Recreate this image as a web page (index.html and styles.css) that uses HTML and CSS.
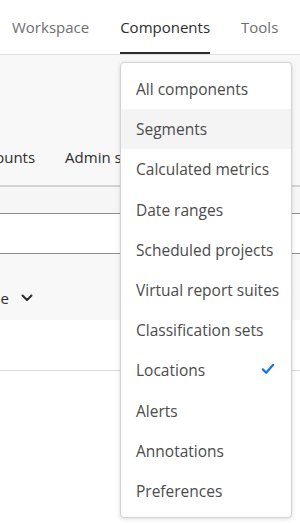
FILE: index.html
```html
<!DOCTYPE html>
<html>
<head>
<meta charset="utf-8">
<link rel="stylesheet" href="styles.css">
</head>
<body>
<div class="page">
  <header class="topbar">
    <nav class="tabs">
      <span class="tab">Workspace</span>
      <span class="tab active">Components</span>
      <span class="tab">Tools</span>
    </nav>
  </header>
  <section class="subnav">
    <div class="subnav-items">
      <span class="subnav-item">Report suites</span>
      <span class="subnav-item">Accounts</span>
      <span class="subnav-item">Admin settings</span>
    </div>
  </section>
  <div class="strip"></div>
  <div class="row-white"></div>
  <div class="row-filter">
    <div class="filter">
      <span class="filter-label">Time zone</span>
      <svg class="chev" width="12" height="8" viewBox="0 0 12 8"><path d="M1.5 1.5 L6 6 L10.5 1.5" fill="none" stroke="#2c2c2c" stroke-width="2" stroke-linecap="round" stroke-linejoin="round"/></svg>
    </div>
  </div>
  <div class="row-empty"></div>

  <ul class="menu">
    <li class="item">All components</li>
    <li class="item hover">Segments</li>
    <li class="item">Calculated metrics</li>
    <li class="item">Date ranges</li>
    <li class="item">Scheduled projects</li>
    <li class="item">Virtual report suites</li>
    <li class="item">Classification sets</li>
    <li class="item selected">Locations
      <svg class="check" width="14" height="12" viewBox="0 0 14 12"><path d="M1.8 6.4 L5.2 9.8 L12.2 1.8" fill="none" stroke="#1473e6" stroke-width="2.2" stroke-linecap="round" stroke-linejoin="round"/></svg>
    </li>
    <li class="item">Alerts</li>
    <li class="item">Annotations</li>
    <li class="item">Preferences</li>
  </ul>
</div>
</body>
</html>
```

FILE: styles.css
```css
* { box-sizing: border-box; }
html, body {
  margin: 0;
  padding: 0;
  background: #ffffff;
  font-family: "Open Sans", "Noto Sans", sans-serif;
  overflow: hidden;
}
.page {
  position: relative;
  width: 300px;
  height: 523px;
  overflow: hidden;
}
.topbar {
  height: 55px;
  background: #ffffff;
  border-bottom: 1px solid #e1e1e1;
}
.tabs {
  display: flex;
  gap: 31px;
  padding-left: 12px;
  height: 54px;
}
.tab {
  display: flex;
  align-items: center;
  height: 54px;
  padding-top: 1px;
  font-size: 15px;
  color: #6e6e6e;
  white-space: nowrap;
  border-bottom: 2px solid transparent;
}
.tab.active {
  color: #2c2c2c;
  border-bottom-color: #2c2c2c;
}
.subnav {
  height: 132px;
  background: #f8f8f8;
  border-bottom: 2px solid #d3d3d3;
  display: flex;
  align-items: flex-end;
}
.subnav-items {
  display: flex;
  gap: 30px;
  margin-left: -151px;
  height: 60px;
  align-items: center;
  padding-top: 4px;
}
.subnav-item {
  font-size: 15px;
  color: #2c2c2c;
  white-space: nowrap;
}
.strip {
  height: 27px;
  background: #f6f6f6;
  border-bottom: 1px solid #8e8e8e;
}
.row-white {
  height: 40px;
  background: #ffffff;
  border-bottom: 1px solid #909090;
}
.row-filter {
  height: 66px;
  background: #f8f8f8;
  display: flex;
  align-items: flex-end;
  padding-bottom: 12px;
}
.filter {
  display: flex;
  align-items: center;
  gap: 12px;
  margin-left: -63px;
}
.filter-label {
  font-size: 15px;
  color: #2c2c2c;
  white-space: nowrap;
}
.row-empty {
  height: 51px;
  background: #ffffff;
  border-bottom: 1px solid #dadada;
}
.menu {
  position: absolute;
  top: 62px;
  left: 120px;
  width: 172px;
  margin: 0;
  padding: 6px 0 6px;
  list-style: none;
  background: #ffffff;
  border: 1px solid #d3d3d3;
  border-radius: 4px;
  box-shadow: 0 1px 4px rgba(0, 0, 0, 0.15);
}
.item {
  display: flex;
  align-items: center;
  justify-content: space-between;
  height: 40.2px;
  padding: 0 16px 0 15px;
  font-size: 15.5px;
  color: #4b4b4b;
  white-space: nowrap;
}
.item.hover {
  background: #f4f4f4;
}
.check {
  margin-top: -2px;
}
```
